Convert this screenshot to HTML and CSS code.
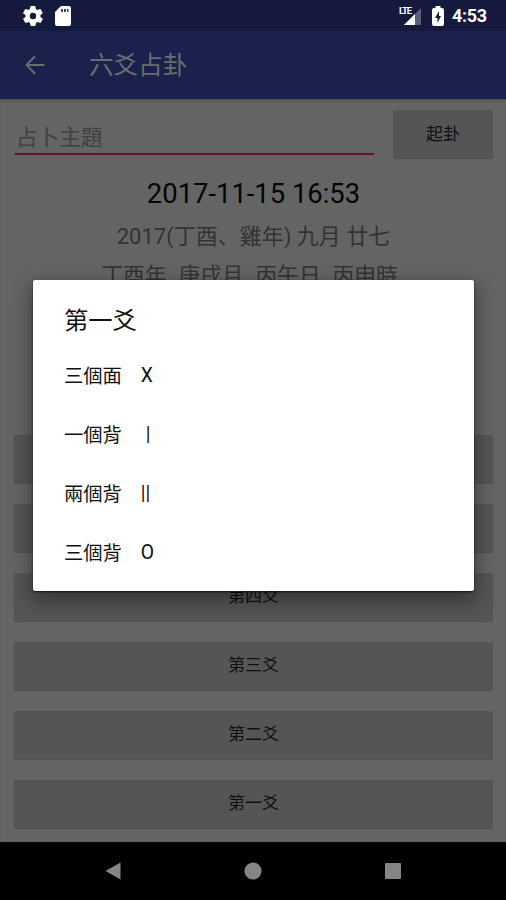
FILE: index.html
```html
<!DOCTYPE html>
<html lang="zh-Hant">
<head>
<meta charset="utf-8">
<title>六爻占卦</title>
<link rel="stylesheet" href="styles.css">
</head>
<body>
<div class="screen">
  <header class="status">
    <svg class="gear" width="20" height="20" viewBox="2 2 20 20"><path d="M19.4 13a7.800 7.800 0 0 0 0-2l2.100-1.600a.5.5 0 0 0 .1-.7l-2-3.400a.5.5 0 0 0-.6-.2l-2.500 1a7.300 7.300 0 0 0-1.700-1l-.4-2.600a.5.5 0 0 0-.5-.5h-4a.5.5 0 0 0-.5.400l-.4 2.700a7.300 7.300 0 0 0-1.700 1l-2.500-1a.5.5 0 0 0-.6.200l-2 3.400a.5.5 0 0 0 .1.700L4.500 11a7.800 7.800 0 0 0 0 2l-2.100 1.600a.5.5 0 0 0-.1.700l2 3.400c.1.200.4.300.6.200l2.500-1a7.300 7.300 0 0 0 1.700 1l.4 2.600c0 .3.200.5.500.5h4c.3 0 .5-.2.500-.4l.4-2.700a7.300 7.300 0 0 0 1.700-1l2.500 1c.2.100.5 0 .6-.2l2-3.400a.5.5 0 0 0-.1-.7zM12 15.200a3.200 3.200 0 1 1 0-6.400 3.200 3.200 0 0 1 0 6.400z" fill="#fff" fill-rule="evenodd"/></svg>
    <svg class="card" width="16" height="20" viewBox="0 0 16 20"><path d="M6 0h8q2 0 2 2v16q0 2-2 2H2q-2 0-2-2V6z" fill="#fff"/><path d="M6 3h2v3H6zM9 3h2v3H9zM12 3h1.500v3H12z" fill="#3c4060"/></svg>
    <span class="lte">LTE</span>
    <svg class="signal" width="17" height="17" viewBox="0 0 17 17"><path d="M17 0v17H0z" fill="#5b5e78"/><path d="M11 6v11H0z" fill="#fff"/></svg>
    <svg class="battery" width="12" height="20" viewBox="0 0 12 20"><path d="M3.500 0h5v2H10q2 0 2 2v14q0 2-2 2H2q-2 0-2-2V4q0-2 2-2h1.500z" fill="#fff"/><path d="M7 5L3 12h2.500v5L9 10H7z" fill="#14193d"/></svg>
    <span class="clock">4:53</span>
  </header>
  <nav class="appbar">
    <svg class="back" width="20" height="20" viewBox="0 0 20 20" fill="none" stroke="#6a6c70" stroke-width="2"><path d="M19.500 10H2M10 1.200L1.500 10l8.500 8.800"/></svg>
    <h1>六爻占卦</h1>
  </nav>
  <main class="content">
    <div class="form">
      <div class="field">占卜主題</div>
      <div class="btn cast">起卦</div>
    </div>
    <div class="date">2017-11-15 16:53</div>
    <div class="lunar" lang="ja">2017(丁酉、雞年) 九月 廿七</div>
    <div class="pillars"><span>丁酉年</span><span>庚戌月</span><span>丙午日</span><span>丙申時</span></div>
    <div class="lines">
      <div class="btn">第六爻</div>
      <div class="btn">第五爻</div>
      <div class="btn">第四爻</div>
      <div class="btn">第三爻</div>
      <div class="btn">第二爻</div>
      <div class="btn">第一爻</div>
    </div>
  </main>
  <footer class="navbar">
    <svg width="16" height="18" viewBox="0 0 16 18"><path d="M15.500.5v17L.5 9z" fill="#858585"/></svg>
    <svg width="18" height="18" viewBox="0 0 18 18"><circle cx="9" cy="9" r="8.600" fill="#858585"/></svg>
    <svg width="16" height="16" viewBox="0 0 16 16"><rect width="16" height="16" rx="1" fill="#858585"/></svg>
  </footer>
  <section class="dialog">
    <h2>第一爻</h2>
    <div class="option"><span>三個面</span><span class="mark">X</span></div>
    <div class="option"><span>一個背</span><span class="mark bar">|</span></div>
    <div class="option"><span>兩個背</span><span class="mark">||</span></div>
    <div class="option"><span>三個背</span><span class="mark">O</span></div>
  </section>
</div>
</body>
</html>
```
FILE: styles.css
```css
* { box-sizing: border-box; }
body { margin: 0; font-family: Roboto, "Noto Sans CJK TC", sans-serif; }
h1, h2 { margin: 0; font-weight: 400; }
svg { display: block; flex: none; }

.screen {
  position: relative;
  width: 506px;
  height: 900px;
  display: flex;
  flex-direction: column;
  overflow: hidden;
  background: #646464;
}

.status {
  height: 31px;
  flex: none;
  display: flex;
  align-items: center;
  padding: 0 18px 0 23px;
  background: #14193d;
  color: #fff;
}
.card { margin-left: 12px; }
.lte {
  margin-left: auto;
  align-self: flex-start;
  margin-top: 6px;
  width: 10px;
  font-size: 9.500px;
  line-height: 10px;
  font-weight: 700;
  letter-spacing: -1.1px;
  white-space: nowrap;
}
.signal { margin: 1px 0 0 -5px; }
.battery { margin-left: 11px; }
.clock {
  width: 36px;
  margin-left: 8px;
  font-size: 18px;
  font-weight: 700;
  line-height: 20px;
  padding-top: 1px;
  letter-spacing: -0.3px;
}

.appbar {
  height: 68px;
  flex: none;
  display: flex;
  align-items: center;
  padding-left: 25px;
  background: #1a214c;
  color: #6a6c70;
}
.appbar h1 { margin: 2px 0 0 44px; font-size: 24.600px; line-height: 36px; }

.content {
  height: 743px;
  flex: none;
  padding: 11px 13px 0 14px;
  color: #333;
  text-align: center;
  box-shadow: inset 0 3px 3px -2px #4c4c4c;
}
.form { display: flex; justify-content: space-between; }
.field {
  width: 359px;
  height: 45px;
  margin-left: 1px;
  padding: 12px 0 0 1px;
  border-bottom: 2px solid #680c31;
  color: #404040;
  font-size: 21.700px;
  line-height: 31px;
  text-align: left;
}
.btn {
  height: 48px;
  border-radius: 2px;
  background: #555;
  box-shadow: 0 1px 1px #505050;
  color: #101010;
  font-size: 17px;
  line-height: 47px;
}
.cast { width: 100px; line-height: 49px; }
.date {
  margin-top: 18px;
  color: #050505;
  font-size: 27.400px;
  line-height: 36px;
}
.lunar {
  margin-top: 9px;
  font-family: Roboto, "Noto Sans CJK JP", sans-serif;
  font-size: 22px;
  line-height: 32px;
}
.pillars {
  display: flex;
  justify-content: center;
  gap: 12px;
  margin: 7px 8px 0 0;
  font-size: 21.700px;
  line-height: 32px;
}
.lines {
  margin-top: 143px;
  display: flex;
  flex-direction: column;
  gap: 21px;
}

.navbar {
  height: 58px;
  flex: none;
  display: flex;
  align-items: center;
  justify-content: space-between;
  padding: 0 105px;
  background: #000;
}

.dialog {
  position: absolute;
  left: 33px;
  top: 280px;
  width: 441px;
  height: 311px;
  padding: 23px 30px 0 31px;
  border-radius: 2px;
  background: #fff;
  color: #111;
  box-shadow: 0 1px 2px #111, 0 8px 20px 3px rgba(0, 0, 0, 0.35);
}
.dialog h2 { font-size: 24.300px; line-height: 36px; margin-bottom: 6px; }
.option {
  display: flex;
  align-items: center;
  height: 59px;
  font-size: 19.300px;
}
.mark { margin: 2px 0 0 19px; }
.bar { margin-left: 24px; }
```
